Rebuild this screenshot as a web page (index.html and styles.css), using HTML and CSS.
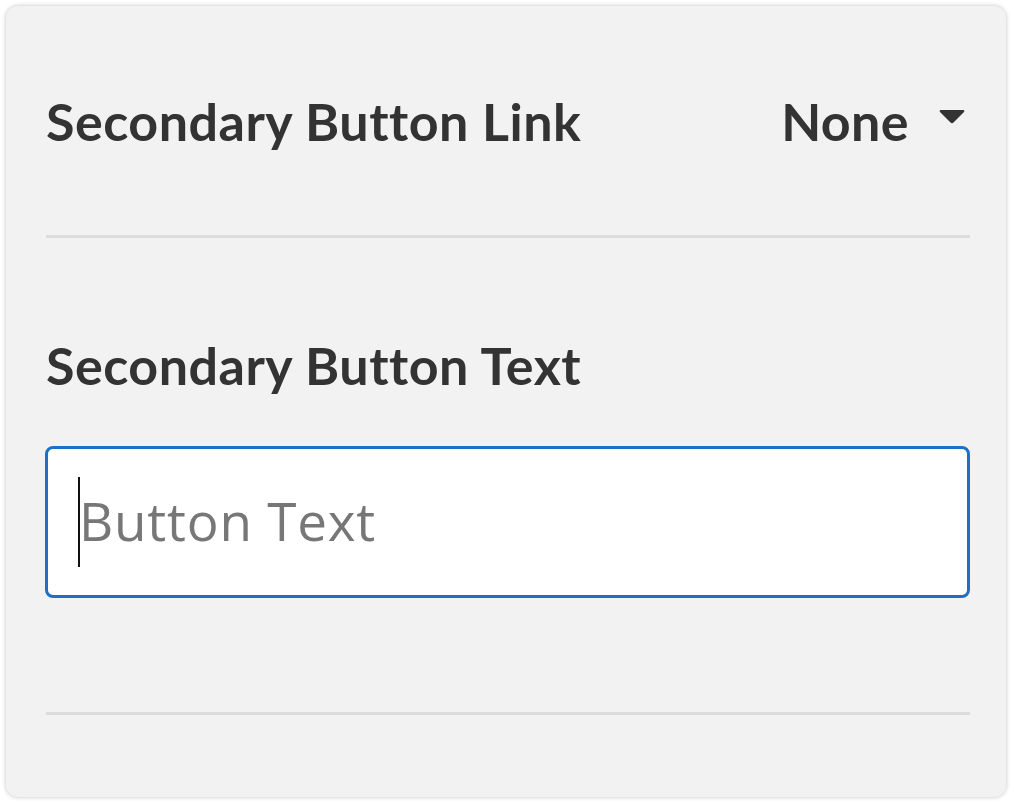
FILE: index.html
```html
<!DOCTYPE html>
<html lang="en">
<head>
    <meta charset="UTF-8">
    <meta name="viewport" content="width=device-width, initial-scale=1.0">
    <title>Secondary Button Settings</title>
    <link rel="stylesheet" href="styles.css">
</head>
<body>
    <div class="panel">
        <div class="row link-row">
            <span class="label">Secondary Button Link</span>
            <span class="select">
                None
                <svg class="caret" width="26" height="15" viewBox="0 0 26 15">
                    <path d="M2 1 H24 Q26 1 25 3 L14.5 13.5 Q13 15 11.5 13.5 L1 3 Q0 1 2 1 Z" fill="#333"/>
                </svg>
            </span>
        </div>
        <div class="divider"></div>

        <div class="field">
            <div class="label">Secondary Button Text</div>
            <div class="input">
                <span class="cursor"></span>
                <span class="placeholder">Button Text</span>
            </div>
        </div>
        <div class="divider"></div>
    </div>
</body>
</html>
```

FILE: styles.css
```css
body {
    margin: 0;
    padding: 6px;
    background: #ffffff;
    font-family: Lato, "Open Sans", sans-serif;
    color: #333;
}

.panel {
    width: 1000px;
    height: 791px;
    box-sizing: border-box;
    background: #f2f2f2;
    border-radius: 12px;
    box-shadow: 0 0 4px rgba(0, 0, 0, 0.25);
    padding: 0 36px 0 40px;
    display: flex;
    flex-direction: column;
}

.label {
    font-size: 52px;
    font-weight: 700;
    letter-spacing: 0.5px;
}

.row {
    display: flex;
    justify-content: space-between;
    align-items: center;
}

.link-row {
    height: 229px;
}

.select {
    display: flex;
    align-items: center;
    gap: 30px;
    font-size: 52px;
    font-weight: 700;
    letter-spacing: 0.4px;
    padding-right: 5px;
}

.caret {
    margin-top: -8px;
}

.divider {
    height: 3px;
    background: #dcdcdc;
}

.field {
    padding-top: 96px;
    height: 474px;
    box-sizing: border-box;
}

.input {
    margin-top: 50px;
    height: 152px;
    margin-left: -1px;
    box-sizing: border-box;
    border: 3px solid #1c71c7;
    border-radius: 8px;
    background: #fff;
    display: flex;
    align-items: center;
    padding-left: 30px;
}

.cursor {
    width: 2px;
    height: 90px;
    background: #111;
}

.placeholder {
    font-family: "Open Sans", "Liberation Sans", sans-serif;
    font-size: 53px;
    color: #777;
    letter-spacing: 0.8px;
    margin-left: -1px;
    margin-top: -4px;
}
```
